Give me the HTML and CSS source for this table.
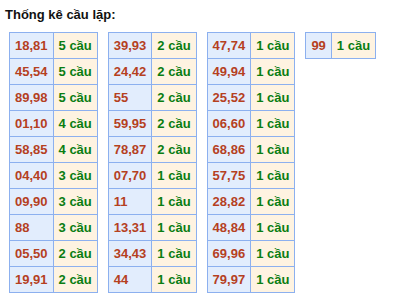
FILE: index.html
```html
<!DOCTYPE html>
<html lang="vi">
<head>
<meta charset="utf-8">
<title>Thống kê cầu lặp</title>
<link rel="stylesheet" href="styles.css">
</head>
<body>
<div class="page">
  <div class="title">Thống kê cầu lặp:</div>
  <div class="tables">
    <table class="stat">
      <tr><td class="num">18,81</td><td class="cnt">5 cầu</td></tr>
      <tr><td class="num">45,54</td><td class="cnt">5 cầu</td></tr>
      <tr><td class="num">89,98</td><td class="cnt">5 cầu</td></tr>
      <tr><td class="num">01,10</td><td class="cnt">4 cầu</td></tr>
      <tr><td class="num">58,85</td><td class="cnt">4 cầu</td></tr>
      <tr><td class="num">04,40</td><td class="cnt">3 cầu</td></tr>
      <tr><td class="num">09,90</td><td class="cnt">3 cầu</td></tr>
      <tr><td class="num">88</td><td class="cnt">3 cầu</td></tr>
      <tr><td class="num">05,50</td><td class="cnt">2 cầu</td></tr>
      <tr><td class="num">19,91</td><td class="cnt">2 cầu</td></tr>
    </table>
    <table class="stat">
      <tr><td class="num">39,93</td><td class="cnt">2 cầu</td></tr>
      <tr><td class="num">24,42</td><td class="cnt">2 cầu</td></tr>
      <tr><td class="num">55</td><td class="cnt">2 cầu</td></tr>
      <tr><td class="num">59,95</td><td class="cnt">2 cầu</td></tr>
      <tr><td class="num">78,87</td><td class="cnt">2 cầu</td></tr>
      <tr><td class="num">07,70</td><td class="cnt">1 cầu</td></tr>
      <tr><td class="num">11</td><td class="cnt">1 cầu</td></tr>
      <tr><td class="num">13,31</td><td class="cnt">1 cầu</td></tr>
      <tr><td class="num">34,43</td><td class="cnt">1 cầu</td></tr>
      <tr><td class="num">44</td><td class="cnt">1 cầu</td></tr>
    </table>
    <table class="stat">
      <tr><td class="num">47,74</td><td class="cnt">1 cầu</td></tr>
      <tr><td class="num">49,94</td><td class="cnt">1 cầu</td></tr>
      <tr><td class="num">25,52</td><td class="cnt">1 cầu</td></tr>
      <tr><td class="num">06,60</td><td class="cnt">1 cầu</td></tr>
      <tr><td class="num">68,86</td><td class="cnt">1 cầu</td></tr>
      <tr><td class="num">57,75</td><td class="cnt">1 cầu</td></tr>
      <tr><td class="num">28,82</td><td class="cnt">1 cầu</td></tr>
      <tr><td class="num">48,84</td><td class="cnt">1 cầu</td></tr>
      <tr><td class="num">69,96</td><td class="cnt">1 cầu</td></tr>
      <tr><td class="num">79,97</td><td class="cnt">1 cầu</td></tr>
    </table>
    <table class="stat">
      <tr><td class="num">99</td><td class="cnt">1 cầu</td></tr>
    </table>
  </div>
</div>
</body>
</html>
```
FILE: styles.css
```css
html, body {
  margin: 0;
  padding: 0;
  background: #ffffff;
}
body {
  font-family: "Liberation Sans", Arial, sans-serif;
  font-size: 13px;
  font-weight: bold;
}
.page {
  padding: 7px 0 0 5px;
}
.title {
  color: #111111;
  font-size: 13px;
  line-height: 15px;
  margin-bottom: 10px;
}
.tables {
  display: flex;
  align-items: flex-start;
  gap: 10px;
  padding-left: 4px;
}
.stat {
  border-collapse: collapse;
}
.stat td {
  border: 1px solid #8cb0ef;
  padding: 5px 5px;
  line-height: 15px;
  text-align: left;
  white-space: nowrap;
}
.num {
  background: #e2edfd;
  color: #b5401f;
}
.cnt {
  background: #fef3e1;
  color: #0a7d12;
}
```
